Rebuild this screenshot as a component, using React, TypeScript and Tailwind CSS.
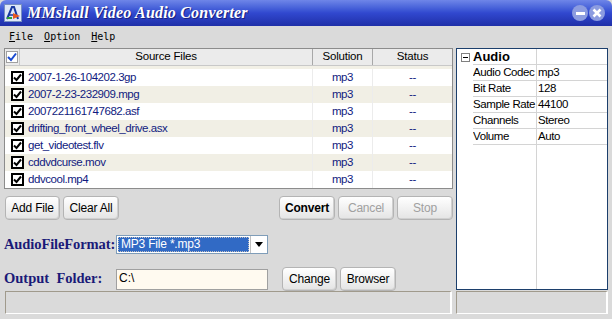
import React from "react";

const files = [
  "2007-1-26-104202.3gp",
  "2007-2-23-232909.mpg",
  "2007221161747682.asf",
  "drifting_front_wheel_drive.asx",
  "get_videotest.flv",
  "cddvdcurse.mov",
  "ddvcool.mp4",
];

const props: [string, string][] = [
  ["Audio Codec", "mp3"],
  ["Bit Rate", "128"],
  ["Sample Rate", "44100"],
  ["Channels", "Stereo"],
  ["Volume", "Auto"],
];

const CheckBox: React.FC = () => (
  <div className="w-[13px] h-[13px] border-2 border-black bg-white flex items-center justify-center">
    <svg width="9" height="9" viewBox="0 0 9 9">
      <path d="M1 4.5 L3.5 7 L8 1.5" stroke="#000" strokeWidth="2" fill="none" />
    </svg>
  </div>
);

const Btn: React.FC<{ label: string; w: string; bold?: boolean; disabled?: boolean }> = ({ label, w, bold, disabled }) => (
  <div
    className={`${w} h-[24px] rounded-[4px] border border-[#b4b4b4] bg-gradient-to-b from-[#ffffff] to-[#e4e4e4] flex items-center justify-center text-[12px] tracking-[-0.2px] shadow-[inset_-1px_-1px_0_#d0d0d0] ${
      bold ? "font-bold text-black" : disabled ? "text-[#a0a0a0]" : "text-black"
    }`}
  >
    {label}
  </div>
);

const App: React.FC = () => {
  return (
    <div className="w-[612px] h-[319px] bg-[#dadada] flex flex-col overflow-hidden font-['Liberation_Sans',Arial,sans-serif]">
      {/* title bar */}
      <div className="h-[26px] shrink-0 rounded-t-[6px] bg-gradient-to-b from-[#6f86e8] via-[#3148cf] to-[#1f2fa8] flex items-center px-[4px]">
        <svg width="18" height="18" viewBox="0 0 18 18" className="mr-[5px]">
          <rect x="0.5" y="0.5" width="17" height="17" fill="#dfe8f8" stroke="#7890c0" />
          <path d="M3 15 L8 3 L10 3 L14 15" stroke="#1a3aa0" strokeWidth="2" fill="none" />
          <path d="M4 11 L12 11" stroke="#1a3aa0" strokeWidth="1.5" />
          <path d="M9 9 L16 12 L9 15 Z" fill="#e85a20" />
          <path d="M3 14 L8 14" stroke="#30a030" strokeWidth="2" />
        </svg>
        <span className="text-white font-['Liberation_Serif',serif] italic font-bold text-[16px] tracking-[0.2px] [text-shadow:1px_1px_0_#1a2380]">
          MMshall Video Audio Converter
        </span>
        <div className="ml-auto flex items-center gap-[1px] mr-[3px]">
          <div className="w-[16px] h-[16px] rounded-full bg-[#8c9ce0] flex items-center justify-center">
            <div className="w-[9px] h-[3px] bg-white" />
          </div>
          <div className="w-[16px] h-[16px] rounded-full bg-[#8c9ce0] flex items-center justify-center">
            <svg width="10" height="10" viewBox="0 0 10 10">
              <path d="M1.5 1.5 L8.5 8.5 M8.5 1.5 L1.5 8.5" stroke="#fff" strokeWidth="2.6" />
            </svg>
          </div>
        </div>
      </div>

      {/* menu */}
      <div className="h-[20px] shrink-0 flex items-end pb-[2px] pl-[9px] gap-[11px] font-['DejaVu_Sans_Mono',monospace] text-[10px] text-black">
        <span><u>F</u>ile</span>
        <span><u>O</u>ption</span>
        <span><u>H</u>elp</span>
      </div>

      {/* main */}
      <div className="flex gap-[3px] pl-[4px] pt-[2px] h-[244px] shrink-0">
        <div className="w-[449px] flex flex-col">
          {/* table */}
          <div className="h-[141px] border border-[#8c8c8c] bg-white flex flex-col">
            <div className="h-[17px] flex bg-[#ebebeb] border-b border-[#c8c8c8] text-[11.5px] tracking-[-0.2px] text-black">
              <div className="w-[15px] flex items-center justify-center border-r border-[#c8c8c8]">
                <div className="w-[12px] h-[12px] bg-white border border-[#a0a0a0] flex items-center justify-center">
                  <svg width="10" height="10" viewBox="0 0 10 10">
                    <path d="M1 5 L4 8 L9 1.5" stroke="#1a4ad0" strokeWidth="2" fill="none" />
                  </svg>
                </div>
              </div>
              <div className="w-[293px] flex items-center justify-center border-r border-[#a8a8a8]">Source Files</div>
              <div className="w-[60px] flex items-center justify-center border-r border-[#a8a8a8]">Solution</div>
              <div className="flex-1 flex items-center justify-center">Status</div>
            </div>
            <div className="h-[3px] bg-[#f2f0e6]" />
            {files.map((f, i) => (
              <div key={f} className={`h-[17px] flex text-[11.5px] tracking-[-0.45px] text-[#101a80] ${i % 2 === 1 ? "bg-[#f1efe5]" : "bg-white"}`}>
                <div className="w-[20px] flex items-center justify-end pr-[1px]">
                  <CheckBox />
                </div>
                <div className="w-[288px] flex items-center pl-[3px] border-r border-[#ececec]">{f}</div>
                <div className="w-[60px] flex items-center justify-center border-r border-[#ececec]">mp3</div>
                <div className="flex-1 flex items-center justify-center text-[#101a80]">--</div>
              </div>
            ))}
          </div>

          {/* buttons */}
          <div className="mt-[7px] flex items-center">
            <div className="ml-[1px] flex gap-[3px]">
              <Btn label="Add File" w="w-[55px]" />
              <Btn label="Clear All" w="w-[56px]" />
            </div>
            <div className="ml-auto flex gap-[3px]">
              <Btn label="Convert" w="w-[56px]" bold />
              <Btn label="Cancel" w="w-[56px]" disabled />
              <Btn label="Stop" w="w-[56px]" disabled />
            </div>
          </div>

          <div className="mt-[5px] -ml-[4px] w-[456px] h-px bg-[#b4cce6]" />

          {/* format */}
          <div className="mt-[10px] flex items-center h-[19px]">
            <span className="w-[112px] whitespace-nowrap font-['Liberation_Serif',serif] font-bold text-[14.5px] tracking-[-0.1px] text-[#1a1a78]">AudioFileFormat:</span>
            <div className="w-[152px] h-[19px] bg-white border border-[#7f9db9] flex">
              <div className="flex-1 m-[1px] bg-[#316ac5] border border-dotted border-[#c0c0c0] text-white text-[12px] tracking-[-0.2px] leading-[13px] pl-[2px]">
                MP3 File *.mp3
              </div>
              <div className="w-[17px] border-l border-[#c0c0c0] bg-white flex items-center justify-center">
                <svg width="8" height="5" viewBox="0 0 8 5">
                  <path d="M0 0 L8 0 L4 5 Z" fill="#000" />
                </svg>
              </div>
            </div>
          </div>

          {/* output */}
          <div className="mt-[13px] flex items-center h-[24px]">
            <span className="w-[112px] font-['Liberation_Serif',serif] font-bold text-[14.5px] text-[#1a1a78] whitespace-pre">Output  Folder:</span>
            <div className="w-[152px] h-[21px] bg-[#fffaf0] border border-[#a0a0a0] text-[12px] pl-[2px] text-black leading-[16px]">
              C:\
            </div>
            <div className="ml-[14px] flex gap-[3px]">
              <Btn label="Change" w="w-[55px]" />
              <Btn label="Browser" w="w-[56px]" />
            </div>
          </div>
        </div>

        {/* property panel */}
        <div className="w-[152px] h-[242px] border border-[#1c3f6c] bg-white flex flex-col">
          <div className="flex h-[16px] text-[12px] text-black">
            <div className="w-[16px] flex items-center justify-center">
              <div className="w-[9px] h-[9px] border border-[#808080] flex items-center justify-center">
                <div className="w-[5px] h-px bg-black" />
              </div>
            </div>
            <div className="w-[64px] font-bold text-[13px] flex items-center border-b border-r border-[#d4d4d4] leading-none">Audio</div>
            <div className="flex-1 border-b border-[#d4d4d4]" />
          </div>
          {props.map(([k, v]) => (
            <div key={k} className="flex h-[16px] text-[11.5px] tracking-[-0.4px] text-black">
              <div className="w-[16px]" />
              <div className="w-[64px] flex items-center border-b border-r border-[#d4d4d4] whitespace-nowrap overflow-hidden">{k}</div>
              <div className="flex-1 flex items-center border-b border-[#d4d4d4] pl-[1px]">{v}</div>
            </div>
          ))}
          <div className="flex-1 flex">
            <div className="w-[16px]" />
            <div className="w-[64px] border-r border-[#d4d4d4]" />
          </div>
        </div>
      </div>

      {/* status bar */}
      <div className="mt-[1px] flex gap-[4px] pl-[5px] h-[23px] shrink-0">
        <div className="w-[447px] border-t border-l border-[#a09a8c] border-r-2 border-r-white border-b border-b-white" />
        <div className="w-[152px] border-t border-l border-[#a09a8c] border-r-2 border-r-white border-b border-b-white" />
      </div>
    </div>
  );
};

export default App;
